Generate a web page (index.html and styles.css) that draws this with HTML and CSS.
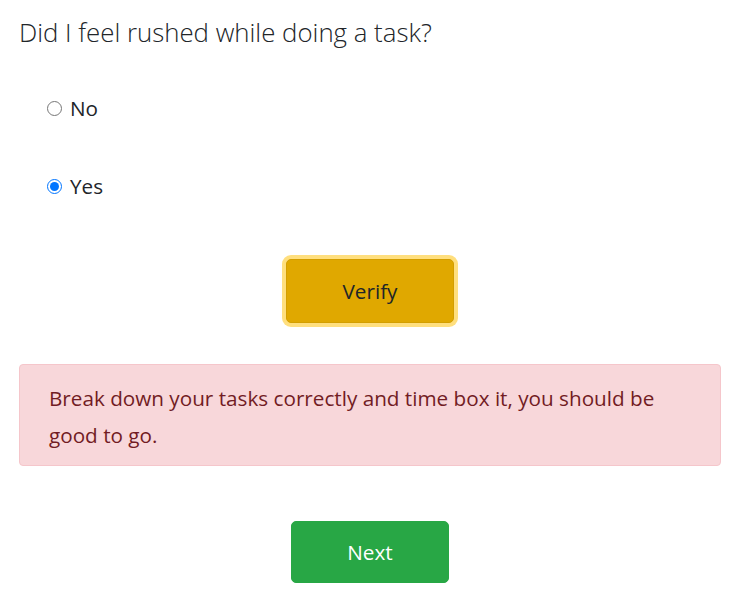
FILE: index.html
```html
<!DOCTYPE html>
<html>
<head>
<meta charset="utf-8">
<link rel="stylesheet" href="styles.css">
</head>
<body>
<div class="page">
  <h4 class="question">Did I feel rushed while doing a task?</h4>
  <div class="options">
    <label class="option"><input type="radio" name="q" value="no"><span>No</span></label>
    <label class="option"><input type="radio" name="q" value="yes" checked><span>Yes</span></label>
  </div>
  <div class="center">
    <button class="btn btn-verify">Verify</button>
  </div>
  <div class="alert">Break down your tasks correctly and time box it, you should be good to go.</div>
  <div class="center">
    <button class="btn btn-next">Next</button>
  </div>
</div>
</body>
</html>
```
FILE: styles.css
```css
html, body {
  margin: 0;
  padding: 0;
  background: #fff;
}
body {
  font-family: "Open Sans", "Noto Sans", sans-serif;
  color: #212529;
}
.page {
  width: 702px;
  padding: 0 19px;
}
.question {
  margin: 0;
  padding-top: 15px;
  font-size: 25.8px;
  font-weight: 300;
  line-height: 34px;
  color: #212529;
}
.options {
  display: flex;
  flex-direction: column;
  gap: 50px;
  padding: 45px 0 0 28px;
}
.option {
  display: flex;
  align-items: center;
  gap: 8px;
  font-size: 20.7px;
  line-height: 28px;
}
.option input {
  margin: 0;
  width: 15px;
  height: 15px;
  accent-color: #0075ff;
}
.center {
  display: flex;
  justify-content: center;
}
.btn {
  font-family: inherit;
  font-size: 20.7px;
  border-radius: 5px;
  cursor: pointer;
}
.btn-verify {
  margin-top: 59px;
  width: 168px;
  height: 64px;
  background: #e0a800;
  border: 1px solid #d39e00;
  color: #212529;
  box-shadow: 0 0 0 4px #ffdf7e;
}
.alert {
  margin-top: 41px;
  padding: 15px 29px 11px;
  background: #f8d7da;
  border: 1px solid #f5c6cb;
  border-radius: 4px;
  color: #721c24;
  font-size: 20.7px;
  line-height: 37px;
}
.btn-next {
  margin-top: 55px;
  width: 158px;
  height: 62px;
  background: #28a745;
  border: 1px solid #28a745;
  color: #fff;
}
```
